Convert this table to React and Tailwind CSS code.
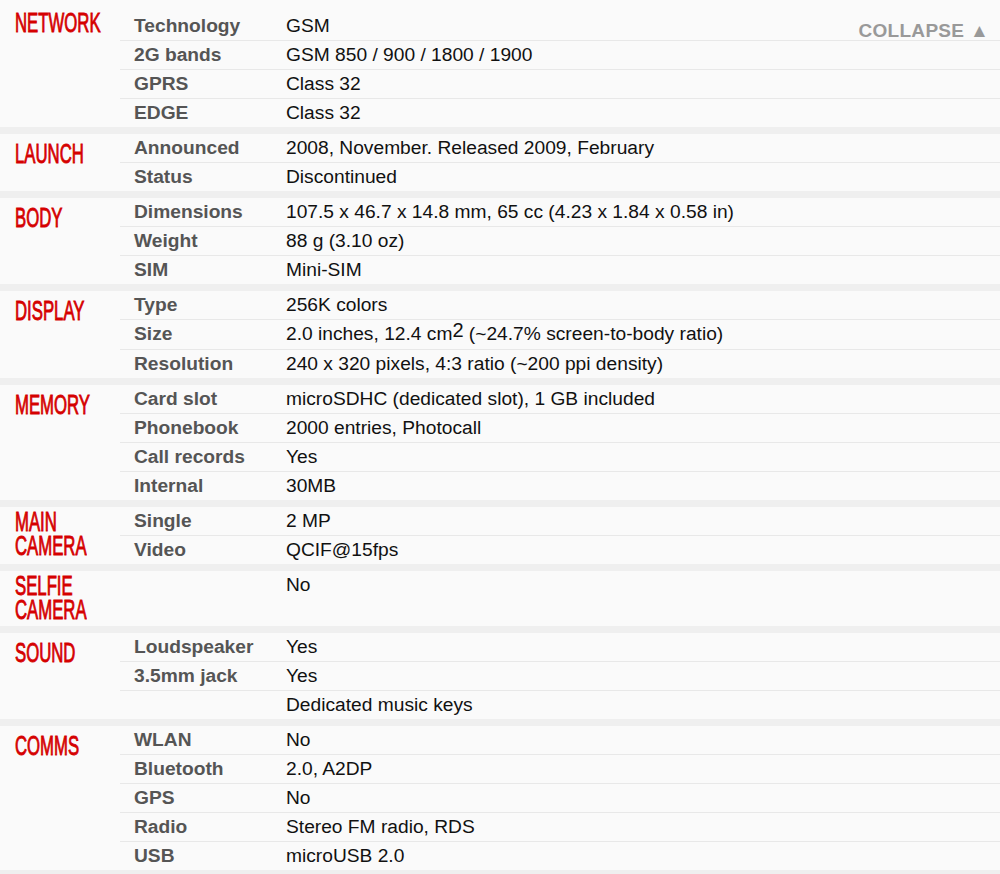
import React from 'react';

// spec sheet sections: title lines + [label, value] rows
const sections = [
  {
    title: ['NETWORK'],
    rows: [
      ['Technology', 'GSM'],
      ['2G bands', 'GSM 850 / 900 / 1800 / 1900'],
      ['GPRS', 'Class 32'],
      ['EDGE', 'Class 32'],
    ],
  },
  {
    title: ['LAUNCH'],
    rows: [
      ['Announced', '2008, November. Released 2009, February'],
      ['Status', 'Discontinued'],
    ],
  },
  {
    title: ['BODY'],
    rows: [
      ['Dimensions', '107.5 x 46.7 x 14.8 mm, 65 cc (4.23 x 1.84 x 0.58 in)'],
      ['Weight', '88 g (3.10 oz)'],
      ['SIM', 'Mini-SIM'],
    ],
  },
  {
    title: ['DISPLAY'],
    rows: [
      ['Type', '256K colors'],
      ['Size', 'size'],
      ['Resolution', '240 x 320 pixels, 4:3 ratio (~200 ppi density)'],
    ],
  },
  {
    title: ['MEMORY'],
    rows: [
      ['Card slot', 'microSDHC (dedicated slot), 1 GB included'],
      ['Phonebook', '2000 entries, Photocall'],
      ['Call records', 'Yes'],
      ['Internal', '30MB'],
    ],
  },
  {
    title: ['MAIN', 'CAMERA'],
    rows: [
      ['Single', '2 MP'],
      ['Video', 'QCIF@15fps'],
    ],
  },
  {
    title: ['SELFIE', 'CAMERA'],
    rows: [['', 'No']],
  },
  {
    title: ['SOUND'],
    rows: [
      ['Loudspeaker', 'Yes'],
      ['3.5mm jack', 'Yes'],
      ['', 'Dedicated music keys'],
    ],
  },
  {
    title: ['COMMS'],
    rows: [
      ['WLAN', 'No'],
      ['Bluetooth', '2.0, A2DP'],
      ['GPS', 'No'],
      ['Radio', 'Stereo FM radio, RDS'],
      ['USB', 'microUSB 2.0'],
    ],
  },
];

const sans = { fontFamily: '"Liberation Sans", Arial, sans-serif' };

function Value({ text }) {
  if (text === 'size') {
    return (
      <span>
        2.0 inches, 12.4 cm<sup className="text-[20px] relative -top-[3px]">2</sup> (~24.7% screen-to-body ratio)
      </span>
    );
  }
  return <span>{text}</span>;
}

function Section({ title, rows, first }) {
  const multi = title.length > 1;
  const pad = first ? 'pt-[12px]' : multi ? 'pt-[4px] pb-[4px]' : 'pt-[9px]';
  return (
    <div className="flex bg-[#fafafa] border-b-[7px] border-[#efefef]">
      <div className={`w-[120px] shrink-0 pl-[15px] ${pad}`}>
        <div
          className="origin-left scale-x-[0.62] text-[27px] leading-[23.5px] text-[#d50000] whitespace-pre-line [-webkit-text-stroke:0.9px_#d50000]"
          style={sans}
        >
          {title.join('\n')}
        </div>
      </div>
      <div className={`flex-1 ${first ? 'pt-[12px]' : ''}`}>
        {rows.map(([label, value], i) => (
          <div
            key={i}
            className={`flex text-[19.2px] leading-[28px] ${i > 0 ? 'border-t border-[#e8e8e8]' : ''} ${value === 'size' ? 'h-[30px]' : ''}`}
          >
            <div className="w-[152px] shrink-0 pl-[14px] font-bold text-[#555]">{label}</div>
            <div className="pl-[14px] text-[#111]">
              <Value text={value} />
            </div>
          </div>
        ))}
      </div>
    </div>
  );
}

export default function App() {
  return (
    <div className="relative w-[1000px] bg-white" style={sans}>
      <div className="absolute right-[11px] top-[17px] text-[19px] font-bold text-[#999] tracking-[0.3px]">
        COLLAPSE ▲
      </div>
      {sections.map((s, i) => (
        <Section key={s.title.join(' ')} title={s.title} rows={s.rows} first={i === 0} />
      ))}
    </div>
  );
}
